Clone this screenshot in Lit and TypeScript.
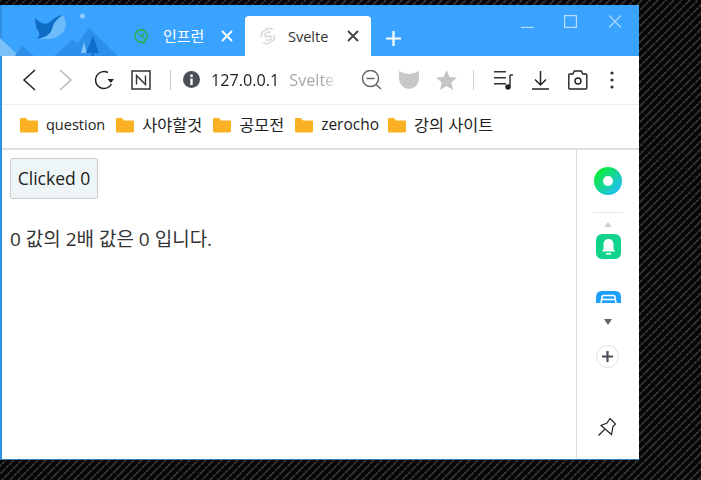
import { LitElement, css, html } from 'lit'
import { customElement } from 'lit/decorators.js'

const folder = html`<svg class="folder" width="18" height="16" viewBox="0 0 18 16">
  <path d="M0 2Q0 1 1 1H6l2 2.500h9Q18 3.500 18 4.500V14q0 1.500-1.500 1.500h-15Q0 15.500 0 14z" fill="#fbb124"/>
</svg>`

// 글자 크기가 라틴/한글 북마크마다 달라서 클래스로 나눔
const marks = [
  { name: 'question', cls: 'latin' },
  { name: '사야할것', cls: 'ko' },
  { name: '공모전', cls: 'ko' },
  { name: 'zerocho', cls: 'latin z' },
  { name: '강의 사이트', cls: 'ko' },
]

@customElement('app-root')
export class AppRoot extends LitElement {
  static styles = css`
    :host {
      display: block;
      width: 701px;
      height: 480px;
      padding-top: 5px;
      box-sizing: border-box;
      overflow: hidden;
      background-color: #050505;
      background-image:
        repeating-linear-gradient(45deg, rgba(0, 0, 0, 0.55) 0 1px, transparent 1px 4px),
        repeating-linear-gradient(135deg, #303030 0 2px, #060606 2px 5.660px);
      font-family: "Open Sans", "Noto Sans CJK KR", sans-serif;
    }
    .win {
      width: 639px;
      height: 455px;
      box-sizing: border-box;
      display: flex;
      flex-direction: column;
      background: #fff;
      border-left: 2px solid #2f8fe0;
      border-bottom: 1px solid #2f78b8;
    }
    .tabs {
      position: relative;
      height: 51px;
      flex: none;
      display: flex;
      align-items: flex-end;
      background: #3aa3ff;
      padding-left: 132px;
    }
    .art { position: absolute; left: -2px; top: -5px; }
    .tab {
      position: relative;
      width: 111px;
      height: 40px;
      box-sizing: border-box;
      display: flex;
      align-items: center;
      font-size: 15px;
      color: #fff;
    }
    .tab.on {
      width: 126px;
      background: #fff;
      color: #333;
      border-radius: 4px 4px 0 0;
      padding-left: 15px;
    }
    .tab .name { margin-left: 15px; flex: 1; white-space: nowrap; padding-bottom: 2px; }
    .tab.on .name { margin-left: 12px; font-size: 14.500px; padding-bottom: 0; }
    .tab .x { margin-right: 12px; }
    .newtab { margin: 0 0 10px 15px; }
    .winbtns {
      position: absolute;
      right: 18px;
      top: 10px;
      display: flex;
    }
    .wmax { margin-left: 30px; }
    .wclose { margin-left: 32px; }
    .bar {
      height: 49px;
      flex: none;
      display: flex;
      align-items: center;
      box-sizing: border-box;
      padding-left: 18px;
      border-bottom: 1px solid #e6f2f4;
    }
    .fwd { margin-left: 22px; }
    .reload { margin-left: 19px; }
    .notion { margin-left: 16px; }
    .sep { width: 1px; height: 20px; background: #cfcfcf; flex: none; }
    .sep.a { margin: 0 12px 0 19px; }
    .sep.b { margin: 0 20px 0 16px; }
    .url {
      font-size: 16.200px;
      color: #222;
      margin-left: 10px;
      padding-bottom: 2px;
      white-space: nowrap;
      width: 130px;
      overflow: hidden;
      -webkit-mask-image: linear-gradient(90deg, #000 114px, transparent 126px);
      mask-image: linear-gradient(90deg, #000 114px, transparent 126px);
    }
    .url span { color: #a8a8a8; margin-left: 10px; }
    .zoom { margin-left: 20px; }
    .shield { margin-left: 16px; }
    .star { margin-left: 17px; }
    .down { margin-left: 19px; }
    .cam { margin-left: 19px; }
    .dots { margin-left: 22px; }
    .marks {
      height: 45px;
      flex: none;
      display: flex;
      align-items: center;
      box-sizing: border-box;
      padding: 0 0 3px 18px;
      color: #222;
      border-bottom: 2px solid #dcdfe3;
    }
    .mark { display: flex; align-items: center; gap: 8px; margin-right: 11px; white-space: nowrap; }
    .mark span { padding-bottom: 2px; }
    .mark .latin { font-size: 14.500px; }
    .mark .ko { font-size: 16.300px; }
    .mark .z { font-size: 15.500px; margin-right: -2px; }
    .folder { flex: none; }
    .body { flex: 1; display: flex; min-height: 0; }
    .page { flex: 1; padding: 8px; color: #333; }
    button {
      display: block;
      height: 41px;
      width: 88px;
      padding: 0 0 2px;
      font: inherit;
      font-size: 17.500px;
      color: #222;
      background: #eef5f6;
      border: 1px solid #ccc;
      border-radius: 2px;
    }
    p { margin: 29px 0 0; font-size: 19px; line-height: 22px; }
    .side {
      width: 63px;
      flex: none;
      box-sizing: border-box;
      border-left: 1px solid #d3dfe6;
      display: flex;
      flex-direction: column;
      align-items: center;
    }
    .ring { margin-top: 17px; }
    .rule { width: 30px; height: 1px; background: #e8e8e8; margin-top: 17px; }
    .up { margin-top: 9px; }
    .bell { margin-top: 7px; }
    .blue { margin-top: 32px; }
    .more { margin-top: 16px; }
    .plus { margin-top: 20px; margin-right: 2px; }
    .pin { margin-top: 50px; margin-right: 2px; }
  `

  render() {
    return html`<div class="win">
      <div class="tabs">
        <svg class="art" width="130" height="56" viewBox="0 0 130 56">
          <path d="M0 38L19 56H0z" fill="#7cc0f8"/>
          <path d="M15 56L22 45 34 56z" fill="#2f8fe6"/>
          <path d="M54 56L72 40 78 43 89 28 118 56z" fill="#2c90ea"/>
          <path d="M81 53L84 42 87 53z" fill="#7ec4fa"/>
          <path d="M86 53L93 36 99 53H94V56H92V53z" fill="#0f6fc8"/>
          <circle cx="82.500" cy="16" r="2.500" fill="#8fcdfb"/>
          <path d="M63 15Q67 22 65 29 60 39 47 39 42 39 36 39 50 36 52 29 54 20 63 15z" fill="#6fbcfb"/>
          <path d="M35 18Q44 27 50 22 56 16 63 15 53 21 52 29 50 37 36 39 42 35 37 29 35 24 35 18z" fill="#0f6cc4"/>
        </svg>
        <div class="tab">
          <svg width="14" height="15" viewBox="0 0 14 15" fill="none" stroke="#2fae4a" stroke-width="1.500">
            <path d="M7 .8A6.200 6.200 0 0 0 1 7Q1 11 5 12.500L10 14V12Q13.200 10.500 13.200 7A6.200 6.200 0 0 0 7 .8z"/>
            <path d="M4 4l4 4 1.500-4M8 8l3 2" stroke-width="1.300"/>
          </svg>
          <span class="name">인프런</span>
          <svg class="x" width="12" height="12" viewBox="0 0 12 12" stroke="#fff" stroke-width="1.800"><path d="M1 1l10 10M11 1L1 11"/></svg>
        </div>
        <div class="tab on">
          <svg width="16" height="18" viewBox="0 0 16 18" fill="none" stroke="#dedede" stroke-width="1.800">
            <path d="M11 5.500Q9 4.500 7 5.500L5 7Q4 9 6 9.500L10 9Q12.500 9.500 11 12L9 13Q7 13.500 5.500 12.500"/>
            <path d="M13 2.500Q10 .5 7 2L3 4.500Q.5 7 2 10M3 15.500Q6 17.500 9 16L13 13.500Q15.500 11 14 8"/>
          </svg>
          <span class="name">Svelte</span>
          <svg class="x" width="12" height="12" viewBox="0 0 12 12" stroke="#444" stroke-width="1.800"><path d="M1 1l10 10M11 1L1 11"/></svg>
        </div>
        <svg class="newtab" width="15" height="15" viewBox="0 0 15 15" stroke="#fff" stroke-width="2.200"><path d="M7.500 0v15M0 7.500h15"/></svg>
        <div class="winbtns">
          <svg width="13" height="13" viewBox="0 0 13 13" stroke="#b9defd" stroke-width="1.200"><path d="M0 12.500h13"/></svg>
          <svg class="wmax" width="13" height="13" viewBox="0 0 13 13" fill="none" stroke="#b9defd" stroke-width="1.200"><path d="M.6.6h11.800v11.800H.6z"/></svg>
          <svg class="wclose" width="12" height="13" viewBox="0 0 12 13" stroke="#b9defd" stroke-width="1.100"><path d="M0 .5l12 12M12 .5L0 12.500"/></svg>
        </div>
      </div>

      <div class="bar">
        <svg width="16" height="24" viewBox="0 0 16 24" fill="none" stroke="#222" stroke-width="1.500"><path d="M15 2L4 12l11 10"/></svg>
        <svg class="fwd" width="16" height="24" viewBox="0 0 16 24" fill="none" stroke="#bbb" stroke-width="1.500"><path d="M2 2l11 10L2 22"/></svg>
        <svg class="reload" width="22" height="22" viewBox="0 0 22 22" fill="none" stroke="#222" stroke-width="1.500">
          <path d="M15 3.500A8.500 8.500 0 1 0 18.500 15"/><path d="M14.500 10h6.500l-3.200 4z" fill="#222" stroke="none"/>
        </svg>
        <svg class="notion" width="20" height="20" viewBox="0 0 20 20" fill="none" stroke="#333" stroke-width="1.500">
          <path d="M1 1h18v18H1z"/><path d="M5.500 14.500V5.500l9 9V5.500" stroke-width="1.400"/>
        </svg>
        <div class="sep a"></div>
        <svg width="18" height="18" viewBox="0 0 18 18">
          <circle cx="8.500" cy="8.500" r="8.500" fill="#4b5058"/><path d="M7.300 3.500h2.400V6H7.300zM7.300 7.500h2.400v6.500H7.300z" fill="#fff"/>
        </svg>
        <div class="url">127.0.0.1<span>Svelte 앱</span></div>
        <svg class="zoom" width="22" height="20" viewBox="0 0 22 20" fill="none" stroke="#666" stroke-width="1.500">
          <circle cx="9.500" cy="8.500" r="8"/><path d="M5.500 8.500h8M15 14.500l5 4.500"/>
        </svg>
        <svg class="shield" width="20" height="18" viewBox="0 0 20 18">
          <path d="M0 0Q5 3 10 3T20 0V8Q19 17 10 18 1 17 0 8z" fill="#c8c8c8"/>
          <circle cx="8" cy="8" r=".6" fill="#b4b4b4"/><circle cx="12" cy="10" r=".6" fill="#b4b4b4"/><circle cx="6" cy="12" r=".6" fill="#b4b4b4"/><circle cx="10" cy="13" r=".6" fill="#b4b4b4"/>
        </svg>
        <svg class="star" width="21" height="20" viewBox="0 0 21 20">
          <path d="M10.500 0l3 7 7.500.6-5.700 5 1.800 7.400-6.600-4-6.600 4 1.800-7.400L0 7.600 7.500 7z" fill="#c4c4c4"/>
        </svg>
        <div class="sep b"></div>
        <svg width="19" height="19" viewBox="0 0 19 19" fill="none" stroke="#333" stroke-width="1.500">
          <path d="M0 .8h12M0 6.800h12M0 12.800h12M16 4v12M16 4h3"/><circle cx="14" cy="16" r="2.700" fill="#222" stroke="none"/>
        </svg>
        <svg class="down" width="17" height="19" viewBox="0 0 17 19" fill="none" stroke="#222" stroke-width="1.500">
          <path d="M8.500 0v14M3 8.500l5.500 5.500 5.500-5.500M0 18h17"/>
        </svg>
        <svg class="cam" width="20" height="20" viewBox="0 0 20 20" fill="none" stroke="#222" stroke-width="1.400">
          <path d="M.8 5q0-1 1-1h3l1.500-3h7l1.500 3h3q1 0 1 1v13q0 1-1 1H1.800q-1 0-1-1z"/><circle cx="10" cy="11" r="3"/>
        </svg>
        <svg class="dots" width="4" height="18" viewBox="0 0 4 18" fill="#333">
          <circle cx="2" cy="2" r="1.600"/><circle cx="2" cy="9" r="1.600"/><circle cx="2" cy="16" r="1.600"/>
        </svg>
      </div>

      <div class="marks">
        ${marks.map(m => html`<div class="mark">${folder}<span class=${m.cls}>${m.name}</span></div>`)}
      </div>

      <div class="body">
        <div class="page">
          <button>Clicked 0</button>
          <p>0 값의 2배 값은 0 입니다.</p>
        </div>
        <div class="side">
          <svg class="ring" width="28" height="28" viewBox="0 0 28 28">
            <defs><linearGradient id="g" x1="0.100" y1="0.100" x2="0.900" y2="0.900"><stop offset="0" stop-color="#0cf030"/><stop offset="1" stop-color="#20bcff"/></linearGradient></defs>
            <circle cx="14" cy="14" r="14" fill="url(#g)"/><circle cx="14" cy="14" r="5" fill="#fff"/>
          </svg>
          <div class="rule"></div>
          <svg class="up" width="8" height="5" viewBox="0 0 8 5"><path d="M0 5L4 0l4 5z" fill="#d0d0d0"/></svg>
          <svg class="bell" width="25" height="25" viewBox="0 0 25 25">
            <rect width="25" height="25" rx="6" fill="#10d48c"/>
            <path d="M12.500 5Q8 5 7.500 10V15L6 17.500H19L17.500 15V10Q17 5 12.500 5z" fill="#fff"/><path d="M10 19h5v1.500h-5z" fill="#fff"/>
          </svg>
          <svg class="blue" width="25" height="12" viewBox="0 0 25 12">
            <path d="M0 12V6Q0 0 6 0H19Q25 0 25 6V12z" fill="#1ea0fa"/>
            <path d="M5 12L6 6Q6 4.500 8 4.500H17Q19 4.500 19 6L20 12M5.500 8.500h14" fill="none" stroke="#fff" stroke-width="1.500"/>
          </svg>
          <svg class="more" width="8" height="6" viewBox="0 0 8 6"><path d="M0 0h8L4 6z" fill="#666"/></svg>
          <svg class="plus" width="23" height="23" viewBox="0 0 23 23">
            <circle cx="11.500" cy="11.500" r="11" fill="#fff" stroke="#dde2e6"/><path d="M11.500 6v11M6 11.500h11" stroke="#4b5058" stroke-width="2.200"/>
          </svg>
          <svg class="pin" width="18" height="18" viewBox="0 0 18 18" fill="none" stroke="#222" stroke-width="1.200">
            <path d="M.5 17.500l6-6M12 .5L17.500 6 15 8.500 13.500 16.500 3 7.500 9 5z"/>
          </svg>
        </div>
      </div>
    </div>`
  }
}
